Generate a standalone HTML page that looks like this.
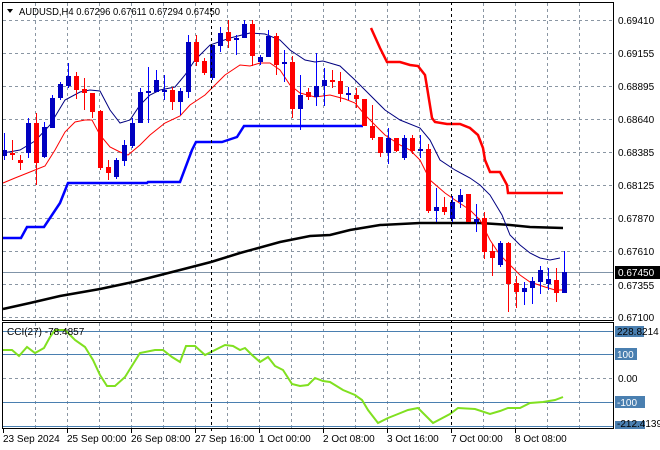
<!DOCTYPE html>
<html><head><meta charset="utf-8"><style>
html,body{margin:0;padding:0;background:#fff;width:660px;height:450px;overflow:hidden}
svg{display:block}
text{font-family:"Liberation Sans",sans-serif;font-size:10px;fill:#000}
</style></head><body>
<svg id="s" width="660" height="450" xmlns="http://www.w3.org/2000/svg">
<rect width="660" height="450" fill="#fff"/>
<g id="grid" stroke="#8a96a3" stroke-width="1" stroke-dasharray="3,3"></g>
<g id="lv"></g>
<line x1="2" y1="272.5" x2="614" y2="272.5" stroke="#8094a8"/>
<polyline id="bstep" fill="none" stroke="#0000ff" stroke-width="2.5"/>
<polyline id="rstep" fill="none" stroke="#ff0000" stroke-width="2.5"/>
<polyline id="ma200" fill="none" stroke="#000" stroke-width="2.5"/>
<polyline id="navy" fill="none" stroke="#000080" stroke-width="1"/>
<polyline id="redma" fill="none" stroke="#ff0000" stroke-width="1"/>
<g id="cand"></g>
<polyline id="cci" fill="none" stroke="#80e020" stroke-width="2"/>
<line x1="211.5" y1="2" x2="211.5" y2="432" stroke="#000" stroke-dasharray="3,3"/>
<line x1="451.5" y1="2" x2="451.5" y2="432" stroke="#000" stroke-dasharray="3,3"/>
<rect x="2.5" y="2.5" width="611" height="318" fill="none" stroke="#000"/>
<rect x="2.5" y="322.5" width="611" height="106" fill="none" stroke="#000"/>
<path d="M7 9 L13 9 L10 13 Z" fill="#000"/>
<text x="19" y="15" textLength="201" lengthAdjust="spacingAndGlyphs">AUDUSD,H4  0.67296 0.67611 0.67294 0.67450</text>
<text x="7" y="335">CCI(27) -78.4857</text>
<g id="pl"></g>
<rect x="615" y="266" width="45" height="13" fill="#000"/>
<text x="618" y="276" style="fill:#fff">0.67450</text>
<rect x="615" y="326" width="29" height="11" fill="#4a7fb0"/>
<text x="617" y="335">228.8214</text>
<rect x="615" y="348" width="22" height="12" fill="#4a7fb0"/>
<text x="617" y="358" style="fill:#fff">100</text>
<text x="618" y="382">0.00</text>
<rect x="615" y="396" width="30" height="12" fill="#4a7fb0"/>
<text x="617" y="406" style="fill:#fff">-100</text>
<rect x="615" y="421" width="30" height="8" fill="#4a7fb0"/>
<text x="617" y="427">-212.4139</text>
<g id="tl"></g>
</svg>
<script>
var N="http://www.w3.org/2000/svg";
function el(p,t,a){var e=document.createElementNS(N,t);for(var k in a)e.setAttribute(k,a[k]);document.getElementById(p).appendChild(e);return e;}
var gx=[35,67,99,131,163,195,227,259,291,323,355,387,419,483,515,547,579];
gx.forEach(function(x){el('grid','line',{x1:x+.5,y1:3,x2:x+.5,y2:320});el('grid','line',{x1:x+.5,y1:323,x2:x+.5,y2:428});});
var gy=[20,53,86,119,152,185,218,251,284,317];
gy.forEach(function(y){el('grid','line',{x1:3,y1:y+.5,x2:613,y2:y+.5});});
el('grid','line',{x1:3,y1:378.5,x2:613,y2:378.5});
[331,354,402,426].forEach(function(y){el('lv','line',{x1:3,y1:y+.5,x2:613,y2:y+.5,stroke:'#4a7fb0'});});
var pl=['0.69410','0.69155','0.68895','0.68640','0.68385','0.68125','0.67870','0.67610','0.67355','0.67100'];
gy.forEach(function(y,i){if(i==8)y=285;var t=el('pl','text',{x:618,y:y+4});t.textContent=pl[i];});
var tl=[[3,'23 Sep 2024'],[67,'25 Sep 00:00'],[131,'26 Sep 08:00'],[195,'27 Sep 16:00'],[259,'1 Oct 00:00'],[323,'2 Oct 08:00'],[387,'3 Oct 16:00'],[451,'7 Oct 00:00'],[515,'8 Oct 08:00']];
tl.forEach(function(a){var t=el('tl','text',{x:a[0],y:442});t.textContent=a[1];el('tl','line',{x1:a[0]+.5,y1:429,x2:a[0]+.5,y2:433,stroke:'#000'});});
function pts(id,a){document.getElementById(id).setAttribute('points',a.map(function(p){return p.join(',')}).join(' '));}
pts('bstep',[[3,238],[21,238],[27,227],[44,227],[60,203],[68,183],[147,183],[148,182],[180,182],[192,150],[196,142],[222,142],[228,140],[237,137],[244,126],[363,126]]);
pts('rstep',[[371,28],[380,48],[387,62],[400,62],[410,65],[418,66],[425,75],[427,87],[432,118],[435,122],[447,124],[460,124],[470,128],[478,135],[483,148],[485,160],[490,172],[500,172],[507,185],[508,193],[563,193]]);
pts('ma200',[[3,309],[30,303],[60,296],[100,289],[133,282],[180,270],[211,262],[240,253],[280,242],[310,236],[330,235],[350,230],[380,225],[420,223],[450,223],[480,223],[510,225],[530,227],[563,228]]);
pts('navy',[[3,153],[20,150],[35,141],[50,125],[65,100],[80,92],[90,90],[100,91],[110,110],[120,123],[130,120],[140,105],[150,95],[160,90],[175,87],[185,75],[195,60],[210,45],[230,38],[250,33],[265,34],[280,40],[290,50],[305,60],[315,62],[323,61],[340,66],[355,80],[370,95],[385,110],[400,120],[420,128],[430,140],[440,160],[455,170],[470,178],[480,185],[490,195],[502,215],[510,235],[520,245],[530,253],[540,258],[550,260],[560,258]]);
pts('redma',[[3,183],[15,178],[30,172],[45,166],[55,150],[65,132],[75,122],[85,120],[92,120],[100,135],[110,147],[120,152],[128,155],[140,145],[150,135],[165,123],[180,116],[190,105],[205,95],[215,85],[225,75],[240,65],[250,66],[260,63],[270,63],[280,70],[290,85],[300,93],[315,97],[330,95],[345,99],[355,103],[365,115],[375,125],[385,135],[400,145],[410,150],[420,160],[430,180],[445,193],[455,200],[470,210],[480,220],[490,240],[500,255],[510,265],[520,275],[530,282],[545,287],[555,290],[563,290]]);
pts('cci',[[3,350],[12,350],[19,356],[27,347],[35,353],[44,348],[50,337],[55,330],[65,330],[75,340],[85,347],[93,360],[100,375],[107,386],[115,386],[125,377],[140,353],[155,350],[163,350],[172,357],[180,362],[186,346],[195,346],[205,355],[215,350],[225,345],[233,346],[240,350],[245,348],[252,355],[260,362],[268,357],[275,366],[283,370],[292,384],[300,386],[308,385],[315,378],[323,381],[330,382],[343,390],[355,395],[362,400],[368,410],[378,423],[388,418],[398,414],[408,410],[418,408],[425,415],[433,423],[450,414],[458,408],[475,409],[490,414],[500,411],[508,408],[520,408],[530,403],[543,402],[555,400],[563,397]]);
var C=[['b',150,156,133,160],['r',153,155,140,160],['r',160,163,155,170],['b',123,153,118,158],['r',123,163,113,185],['b',127,157,122,158],['b',98,128,95,128],['b',84,98,82,100],['b',76,86,63,88],['r',76,90,72,99],['r',89,93,78,110],['r',93,112,93,118],['r',111,168,110,170],['r',167,173,160,180],['b',160,177,158,179],['b',145,161,140,166],['b',123,146,118,148],['b',92,123,88,123],['b',91,92,67,123],['b',80,92,70,92],['b',90,92,75,100],['r',90,102,87,110],['b',91,102,88,115],['b',42,92,35,98],['r',42,62,35,66],['r',61,73,58,75],['b',45,78,45,80],['b',33,46,27,52],['r',32,41,20,48],['b',38,40,35,55],['b',24,38,20,38],['r',24,56,20,66],['b',57,62,55,65],['b',36,57,30,57],['r',36,65,33,75],['b',62,64,50,82],['r',62,109,56,118],['b',95,109,75,130],['r',92,97,88,100],['b',86,97,53,106],['b',80,86,68,106],['r',80,82,70,88],['r',81,94,72,102],['b',93,95,87,100],['r',95,99,88,108],['r',99,126,99,126],['r',126,138,105,140],['r',137,153,137,157],['b',138,153,128,164],['r',138,151,138,152],['b',138,158,135,160],['r',138,151,135,154],['b',149,151,135,158],['r',149,211,144,213],['b',207,211,188,222],['r',207,212,197,215],['b',202,219,196,222],['b',195,202,189,208],['r',194,222,194,222],['b',219,222,204,232],['r',218,252,212,259],['r',251,258,244,276],['b',243,265,241,267],['r',243,284,242,312],['r',283,292,276,308],['b',288,292,282,305],['b',281,288,277,304],['b',270,282,266,294],['b',279,284,268,290],['r',280,293,268,302],['b',272,293,251,293]];
C.forEach(function(c,i){var x=4+8*i;var col=c[0]=='b'?'#0000c0':'#ff0000';var wc=c[0]=='b'?'#0000ff':'#ff0000';
el('cand','line',{x1:x+.5,y1:c[3],x2:x+.5,y2:c[4],stroke:wc});
el('cand','rect',{x:x-2,y:c[1],width:5,height:Math.max(2,c[2]-c[1]),fill:col});});
</script>
</body></html>
